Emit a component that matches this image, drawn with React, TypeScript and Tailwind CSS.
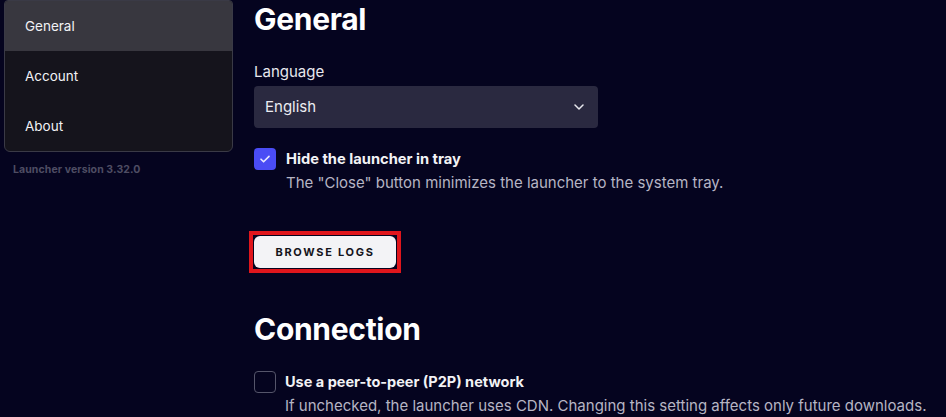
import React from "react";

function Check() {
  return (
    <svg width="14" height="14" viewBox="0 0 14 14" fill="none">
      <path d="M3 7.2l2.6 2.6L11 4.4" stroke="#e8e8ff" strokeWidth="1.6" strokeLinecap="round" strokeLinejoin="round" />
    </svg>
  );
}

export default function App() {
  return (
    <div
      className="h-[417px] w-[946px] overflow-hidden bg-[#05041f] flex text-white"
      style={{ fontFamily: "Inter, 'Noto Sans', sans-serif" }}
    >
      <div className="w-[254px] shrink-0 pl-[4px] pr-[21px]">
        <div className="rounded-b-[6px] rounded-t-[4px] border border-[#3a3a46] bg-[#15141c] overflow-hidden">
          <div className="h-[50px] bg-[#38373f] flex items-center pl-[20px] text-[13.5px] text-[#f2f2f5]">General</div>
          <div className="h-[50px] flex items-center pl-[20px] text-[13.5px] text-[#f2f2f5]">Account</div>
          <div className="h-[50px] flex items-center pl-[20px] text-[13.5px] text-[#f2f2f5]">About</div>
        </div>
        <div className="mt-[10px] pl-[9px] text-[10.5px] tracking-[0.1px] font-bold text-[#4e4d63]">Launcher version 3.32.0</div>
      </div>
      <div className="flex-1 flex flex-col">
        <h1 className="text-[30px] font-bold leading-[36px] mt-[1px] tracking-[-0.3px]">General</h1>
        <div className="mt-[26px] text-[15px] leading-[18px] text-[#e8e8ee]">Language</div>
        <div className="mt-[5px] w-[344px] h-[43px] rounded-[4px] bg-[#2a2940] flex items-center justify-between pl-[11px] pr-[14px]">
          <span className="text-[15px] text-[#ececf2]">English</span>
          <svg width="10" height="6" viewBox="0 0 10 6" fill="none">
            <path d="M1 1l4 4 4-4" stroke="#e8e8ee" strokeWidth="1.5" strokeLinecap="round" strokeLinejoin="round" />
          </svg>
        </div>
        <div className="mt-[20px] flex gap-[10px]">
          <div className="w-[22px] h-[22px] rounded-[4px] bg-[#4a4cf5] flex items-center justify-center shrink-0">
            <Check />
          </div>
          <div className="flex flex-col">
            <div className="text-[14.7px] font-bold leading-[22px] text-[#f2f2f5]">Hide the launcher in tray</div>
            <div className="text-[15px] leading-[22px] mt-[2px] text-[#b6b5c4]">The "Close" button minimizes the launcher to the system tray.</div>
          </div>
        </div>
        <div className="mt-[37px] -ml-[5px] w-[152px] h-[43px] border-[4px] border-[#e0161c] p-[1px] flex">
          <div className="flex-1 rounded-[6px] bg-[#f3f3f6] flex items-center justify-center text-[11px] font-bold tracking-[1.7px] text-[#15141c]">
            BROWSE LOGS
          </div>
        </div>
        <h2 className="mt-[38px] text-[30px] font-bold leading-[36px] tracking-[-0.3px]">Connection</h2>
        <div className="mt-[24px] flex gap-[9px]">
          <div className="w-[22px] h-[22px] rounded-[4px] border border-[#55556a] shrink-0"></div>
          <div className="flex flex-col">
            <div className="text-[14.5px] font-bold leading-[22px] text-[#f2f2f5]">Use a peer-to-peer (P2P) network</div>
            <div className="text-[15px] leading-[22px] mt-[2px] text-[#b6b5c4]">If unchecked, the launcher uses CDN. Changing this setting affects only future downloads.</div>
          </div>
        </div>
      </div>
    </div>
  );
}
